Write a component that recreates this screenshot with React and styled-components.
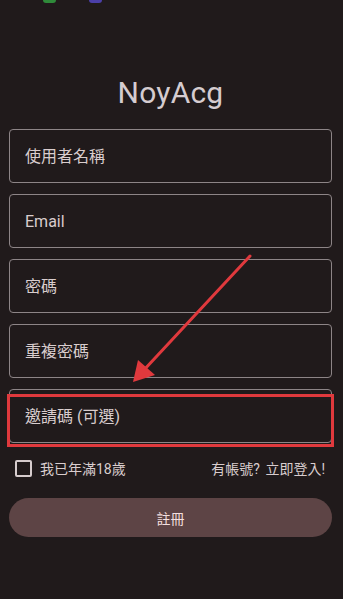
import React, { useState } from "react";
import styled, { createGlobalStyle } from "styled-components";

const GlobalStyle = createGlobalStyle`
  html, body {
    margin: 0;
    padding: 0;
    background: #201a1b;
  }
  * {
    box-sizing: border-box;
  }
`;

const fontStack = `Roboto, "Noto Sans CJK TC", "Noto Sans", sans-serif`;

const Page = styled.div`
  position: relative;
  width: 343px;
  height: 599px;
  overflow: hidden;
  background: #201a1b;
  font-family: ${fontStack};
  color: #d9cdce;
`;

const StatusBar = styled.div`
  height: 3px;
  display: flex;
  gap: 33px;
  padding-left: 43px;
  overflow: hidden;
`;

const StatusDot = styled.span`
  width: 13px;
  height: 6px;
  margin-top: -3px;
  border-radius: 3px;
  background: ${(p) => p.color};
`;

const Content = styled.div`
  display: flex;
  flex-direction: column;
  padding: 0 11px 0 9px;
`;

const Title = styled.h1`
  margin: 72px 0 18px;
  font-size: 30px;
  line-height: 36px;
  font-weight: 400;
  text-align: center;
  color: #d5ccd0;
  letter-spacing: 0.2px;
`;

const Fields = styled.div`
  display: flex;
  flex-direction: column;
  gap: 11px;
`;

const FieldWrap = styled.div`
  position: relative;
`;

const Field = styled.input`
  display: block;
  width: 100%;
  height: 54px;
  padding: 0 15px;
  border: 1px solid #8d8587;
  border-radius: 4px;
  background: transparent;
  font-family: ${fontStack};
  font-size: 16px;
  color: #d9cdce;
  outline: none;
  &::placeholder {
    color: #d9cdce;
  }
`;

const Highlight = styled.div`
  position: absolute;
  left: -2px;
  right: -2px;
  top: 5px;
  bottom: -4px;
  border: 3px solid #e0393d;
  pointer-events: none;
`;

const OptionsRow = styled.div`
  display: flex;
  align-items: center;
  justify-content: space-between;
  margin-top: 16px;
  padding: 0 7px 0 6px;
  height: 18px;
  font-size: 14px;
`;

const CheckLabel = styled.label`
  display: flex;
  align-items: center;
  gap: 8px;
  cursor: pointer;
`;

const Box = styled.span`
  width: 17px;
  height: 17px;
  border: 2px solid #d6cccd;
  border-radius: 2px;
  background: ${(p) => (p.checked ? "#d6cccd" : "transparent")};
`;

const LoginLink = styled.span`
  color: #d9cdce;
  word-spacing: 2px;
  cursor: pointer;
`;

const Submit = styled.button`
  margin-top: 21px;
  height: 39px;
  border: none;
  border-radius: 20px;
  background: #5d4445;
  color: #f3dfdf;
  font-family: ${fontStack};
  font-size: 14px;
  cursor: pointer;
`;

const Overlay = styled.svg`
  position: absolute;
  top: 0;
  left: 0;
  pointer-events: none;
`;

const fields = [
  { name: "user", placeholder: "使用者名稱" },
  { name: "email", placeholder: "Email" },
  { name: "pass", placeholder: "密碼", type: "password" },
  { name: "repeat", placeholder: "重複密碼", type: "password" },
  { name: "invite", placeholder: "邀請碼 (可選)", highlight: true },
];

export default function App() {
  const [adult, setAdult] = useState(false);

  return (
    <Page>
      <GlobalStyle />
      <StatusBar>
        <StatusDot color="#2f8a3a" />
        <StatusDot color="#4b3fa8" />
      </StatusBar>
      <Content>
        <Title>NoyAcg</Title>
        <Fields>
          {fields.map((f) => (
            <FieldWrap key={f.name}>
              <Field type={f.type || "text"} placeholder={f.placeholder} />
              {f.highlight && <Highlight />}
            </FieldWrap>
          ))}
        </Fields>
        <OptionsRow>
          <CheckLabel onClick={() => setAdult(!adult)}>
            <Box checked={adult} />
            我已年滿18歲
          </CheckLabel>
          <LoginLink>有帳號? 立即登入!</LoginLink>
        </OptionsRow>
        <Submit>註冊</Submit>
      </Content>
      {/* annotation arrow */}
      <Overlay width="343" height="599">
        <line x1="250" y1="256" x2="143" y2="371" stroke="#e0393d" strokeWidth="3" strokeLinecap="round" />
        <polygon points="133,382 138,360 155,375" fill="#e0393d" />
      </Overlay>
    </Page>
  );
}
